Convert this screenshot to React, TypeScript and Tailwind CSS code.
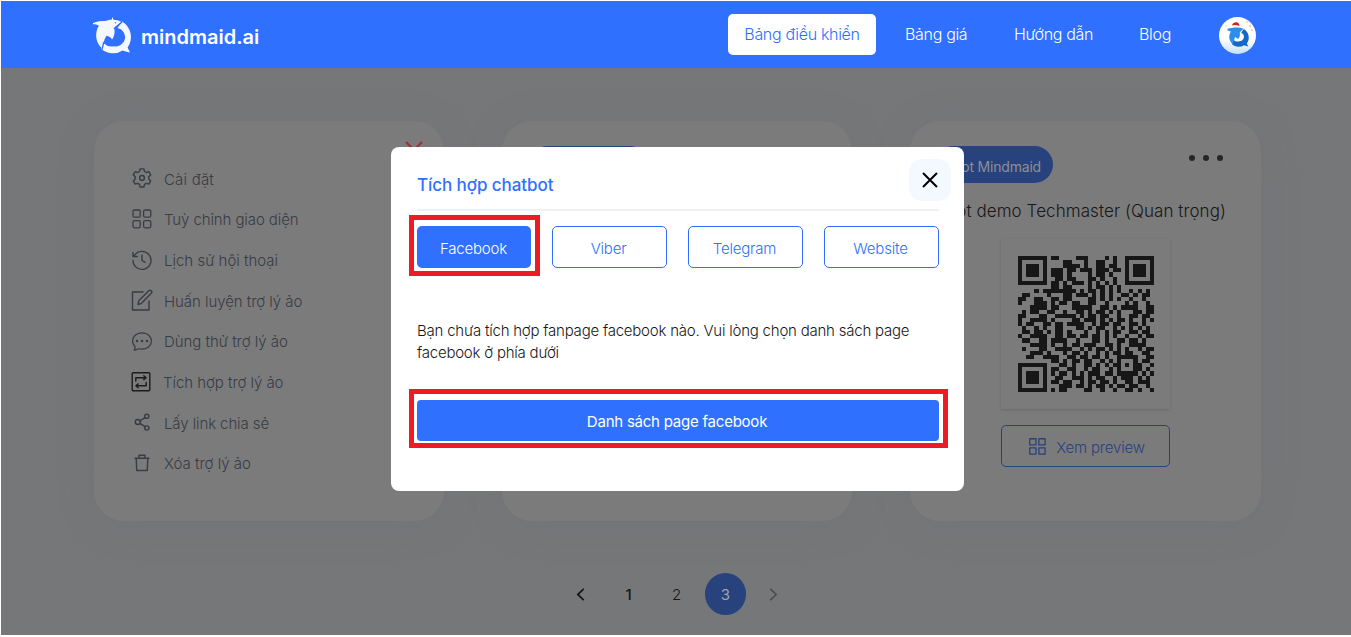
import type { ReactNode } from "react";
import { BsChatDots } from "react-icons/bs";

const QR = [
  "#######.##....###....#.#..#######",
  "#.....#....##...#..##..#..#.....#",
  "#.###.#....####.#..##.##..#.###.#",
  "#.###.#.###.##.###.###.##.#.###.#",
  "#.###.#.###.#....#.##.#...#.###.#",
  "#.....#..##.##...##.#..#..#.....#",
  "#######.##.#.###.#.#.#.#..#######",
  "........##.##....#.##.#.#........",
  "....#.########.#.##.#.#.#..#.#.#.",
  ".##....#...##.###.#.#.#..##.#.##.",
  "##..##..##.##....##.#.#.#..#..#..",
  "#...###.#.##.##..##..#....#.#..#.",
  "...####.##...#####..##.#.####..##",
  ".#.##..##..#..##.#.##.#.#...##.##",
  "##...##..#####.#.##.##..#..##.##.",
  "#..####.#....##.###.#.#.##.#..#.#",
  "#.##..##.##.####..#.##.##..##.#..",
  ".#..#.#..##...##.#.##..#.#.#.#.#.",
  ".##.##.#.##.#...#..#.#.##..##.##.",
  "#..####..##.##.##.##.#.#..#..#.##",
  ".##..##.####..#...##.#..##.##.#..",
  "...####.#..#.##.###..##.#..####..",
  ".#...##..####..#.#.##.#.#.#..#.##",
  "...###.#...#.##.#..#.#.##.##..##.",
  "..##..####..##.##.##.#..#####..##",
  "........##.#.##.##..#.#.#...#.##.",
  "#######...##.#..##.#.#.##.#.##..#",
  "#.....#.##..##..#.##..#.#...##.#.",
  "#.###.#.#.##.#.#.###.##.#####.#.#",
  "#.###.#..##..###.#.##..#.###.#.#.",
  "#.###.#.##.##..#.##.##.#..##.###.",
  "#.....#...###.##.#.##.#.##.##..#.",
  "#######.#.##....##..#..#..##.#..#",
];

function QrCode() {
  return (
    <svg className="size-[136px]" viewBox="0 0 33 33" shapeRendering="crispEdges" fill="#171717">
      {QR.flatMap((row, y) =>
        [...row].map((cell, x) => (cell === "#" ? <rect key={`${x}-${y}`} x={x} y={y} width="1" height="1" /> : null)),
      )}
    </svg>
  );
}

function DolphinMark({ className, fill, gap }: { className: string; fill: string; gap: string }) {
  return (
    <svg className={className} viewBox="0 0 39 37" fill="none">
      <path d="M29 4.5A18 18 0 0 1 34.6 30.5L37 35.5C33 34.8 32 34 29.5 33.4A17 17 0 0 1 8 31.5L11 26.5A11 11 0 0 0 21 29.3A9.3 9.3 0 0 0 24.5 11Z" fill={fill} />
      <path d="M0 6C4 4.3 8 4 12 4C15 3.2 17 2.8 18.7 2.8L19.3 0L20.5 2.8C23 3 26 3.5 28.5 5L21.5 10.2C21.5 14 22.3 18 19 22.5C18 20.2 16 19 13.5 18.7C11 22 10.2 27 9.3 31.5C4 27.5 1.8 19.5 4 12.8C4.5 11 5 10 6 9C4 7.5 2 7.3 0 7.3Z" fill={fill} />
      <path d="M29.2 4.8L21 12M10.8 25L9 32.5" stroke={gap} strokeWidth="1.3" />
      <circle cx="22.5" cy="5.8" r="0.7" fill={gap} />
    </svg>
  );
}

function Line({ children, className = "size-[22px]", stroke = 1.4 }: { children: ReactNode; className?: string; stroke?: number }) {
  return (
    <svg className={className} viewBox="0 0 22 22" fill="none" stroke="currentColor" strokeWidth={stroke} strokeLinecap="round" strokeLinejoin="round">
      {children}
    </svg>
  );
}

function GridGlyph({ round }: { round: number }) {
  return (
    <>
      <rect x="2" y="2" width="7.2" height="7.2" rx={round} />
      <rect x="12.6" y="2" width="7.2" height="7.2" rx={round} />
      <rect x="2" y="12.6" width="7.2" height="7.2" rx={round} />
      <rect x="12.6" y="12.6" width="7.2" height="7.2" rx={round} />
    </>
  );
}

const MENU: { label: string; text: string; icon: ReactNode }[] = [
  {
    label: "Cài đặt",
    text: "tracking-[0.2px]",
    icon: (
      <Line>
        <path d="M9.1 1.9h3.8l.6 2.6 1.8 1 2.5-.8 1.9 3.2-1.9 1.9v2.2l1.9 1.9-1.9 3.2-2.5-.7-1.8 1-.6 2.6H9.1l-.6-2.6-1.8-1-2.5.7-1.9-3.2 1.9-1.9V9.8L2.3 7.9l1.9-3.2 2.5.8 1.8-1z" />
        <circle cx="11" cy="10.9" r="2.4" />
      </Line>
    ),
  },
  { label: "Tuỳ chỉnh giao diện", text: "tracking-[-0.1px]", icon: <Line stroke={1.3}><GridGlyph round={1.5} /></Line> },
  {
    label: "Lịch sử hội thoại",
    text: "tracking-[0px]",
    icon: (
      <Line>
        <path d="M3.3 6.7A9 9 0 1 1 2 11.5M2 3.5v4h4.3M11 6v5.5l3 1.8" />
      </Line>
    ),
  },
  {
    label: "Huấn luyện trợ lý ảo",
    text: "tracking-[-0.05px]",
    icon: (
      <Line>
        <path d="M12 3H1.5v18H18v-9M7 15.500l.8-3.800L18 1.500c1.700-1 3.600.8 2.500 2.500L10.500 14.300z" />
      </Line>
    ),
  },
  { label: "Dùng thử trợ lý ảo", text: "tracking-[-0.03px]", icon: <BsChatDots className="ml-px size-[20px]" /> },
  {
    label: "Tích hợp trợ lý ảo",
    text: "-ml-px tracking-[-0.05px]",
    icon: (
      <span className="text-[#1c1c1c]">
        <Line>
          <rect x="1.2" y="1.8" width="17.6" height="18" rx="1" />
          <path d="M4.800 10V6.700h10M12.800 4.800l2.300 1.900-2.300 1.900M15.200 11.500v3.300h-10M7.200 12.900l-2.300 1.900 2.300 1.900" />
        </Line>
      </span>
    ),
  },
  {
    label: "Lấy link chia sẻ",
    text: "tracking-[-0.1px]",
    icon: (
      <Line>
        <circle cx="6.8" cy="11" r="2.5" />
        <circle cx="15.8" cy="5.3" r="2.1" />
        <circle cx="15.8" cy="17" r="2.1" />
        <path d="M9 9.800l5-3.200M9 12.400l5 3.300" />
      </Line>
    ),
  },
  {
    label: "Xóa trợ lý ảo",
    text: "tracking-[0px]",
    icon: (
      <Line>
        <path d="M4 6.300h14M8 6V3.300h6V6M5.200 6.500l.5 12h10.600l.5-12" />
      </Line>
    ),
  },
];

const CARD = "h-[400px] rounded-[30px] bg-[#7b7b7b] shadow-[0_4px_40px_rgba(90,98,110,0.13)]";

function Highlight({ edge }: { edge: string }) {
  return <span className={`pointer-events-none absolute -top-[11px] -right-[9px] -left-2 border-[5px] border-[#ed1c24] ${edge}`} />;
}

export default function App() {
  return (
    <div className="relative h-[637px] w-[1351px] overflow-hidden bg-white pt-px pb-[2px] pl-px font-['Inter',sans-serif]">
      <div className="flex h-full flex-col bg-[#767779]">
        <header className="flex h-[67px] shrink-0 items-center bg-[#2f70ff] pr-[95px] pl-[92px] text-white">
          <DolphinMark className="mt-px h-[37px] w-[39px]" fill="#f5f8ff" gap="#2f70ff" />
          <span className="mt-[5px] ml-[9px] text-[20px] font-semibold">mindmaid.ai</span>
          <nav className="ml-auto flex items-center text-[16px] font-light tracking-[-0.32px]">
            <a className="flex h-[41px] w-[148px] items-center justify-center rounded-[5px] bg-white pb-[2px] text-[#2f70ff]">
              <span className="whitespace-nowrap">Bảng điều khiển</span>
            </a>
            <a className="ml-[29px] w-[109px] pb-[2px] whitespace-nowrap">Bảng giá</a>
            <a className="w-[125px] pb-[2px] whitespace-nowrap">Hướng dẫn</a>
            <a className="w-[80px] pb-[2px]">Blog</a>
          </nav>
          <span className="mt-px flex size-[37px] items-center justify-center overflow-hidden rounded-full bg-[linear-gradient(#ffffff_60%,#c6def5)]">
            <svg className="size-[37px]" viewBox="0 0 37 37">
              <g transform="translate(8.500 9.500) scale(0.56)">
                <path d="M29 4.500A18 18 0 0 1 34.600 30.500L37 35.500L29.500 33.400A17 17 0 0 1 8 31.500L11 24A9.500 9.500 0 0 0 21 26.300A8 8 0 0 0 24.500 11Z" fill="#1767c9" />
                <path d="M0 4C8 2 20 0 28.500 4L22 10.200C22.500 15 22.300 19 19 22.500L13.500 18.700L9.300 31.500C3 26 1 18 6 9L0 7.300Z" fill="#2b8eea" />
              </g>
              <path d="M13 8.500Q14 5 17.500 5.200Q20.500 6 20.500 9Q16 7.500 13 8.500Z" fill="#d6201d" />
              <g fill="#ead9ad">
                <circle cx="28" cy="5" r="1" />
                <circle cx="31" cy="9" r="1.2" />
                <circle cx="33" cy="13" r="1" />
                <circle cx="7" cy="9" r=".8" />
              </g>
            </svg>
          </span>
        </header>

        <main className="flex flex-col pt-[53px] pl-[93px]">
          <div className="flex gap-[58px]">
            <section className={`${CARD} relative w-[350px] pt-[37px] pl-[37px]`}>
              <ul className="text-[15px] text-[#383c45]">
                {MENU.map((item) => (
                  <li key={item.label} className="flex h-[40.7px] items-center">
                    <span className="flex w-[33px] shrink-0 items-center">{item.icon}</span>
                    <span className={`pt-[3px] font-light whitespace-nowrap ${item.text}`}>{item.label}</span>
                  </li>
                ))}
              </ul>
              <svg className="absolute top-[20px] right-[20px] size-[20px]" viewBox="0 0 20 20" stroke="#a02f33" strokeWidth="2">
                <path d="M2 1l16 16M18 1L2 17" />
              </svg>
            </section>

            <section className={`${CARD} flex w-[350px] justify-start pt-[25px] pl-[27px]`}>
              <span className="h-[37px] w-[119px] rounded-full bg-[#28427e]" />
            </section>

            <section className={`${CARD} flex w-[351px] flex-col items-center pt-[25px]`}>
              <div className="flex w-full items-start justify-between pr-[38px] pl-[25px]">
                <span className="flex h-[37px] w-[118px] items-center justify-end rounded-full bg-[#28427e] pt-[3px] pr-3 text-[14px] tracking-[-0.2px] whitespace-nowrap text-[#8d8f94]">
                  Bot Mindmaid
                </span>
                <span className="flex gap-2 pt-[9px]">
                  <i className="size-[6px] rounded-full bg-[#262626]" />
                  <i className="size-[6px] rounded-full bg-[#262626]" />
                  <i className="size-[6px] rounded-full bg-[#262626]" />
                </span>
              </div>
              <h3 className="mt-4 self-end pr-[35px] text-[17px] leading-6 font-light tracking-[0.08px] whitespace-nowrap text-[#171717]">
                Bot demo Techmaster (Quan trọng)
              </h3>
              <div className="mt-4 flex h-[170px] w-[169px] items-center justify-center pl-px shadow-[0_1px_3px_rgba(0,0,0,0.15)]">
                <QrCode />
              </div>
              <button className="mt-4 flex h-[42px] w-[169px] items-center justify-center rounded-[5px] border border-[#28427e] pt-px pl-[2px] text-[#28427e]">
                <Line className="size-[19px]" stroke={1.5}><GridGlyph round={0} /></Line>
                <span className="ml-[9px] pt-[3px] text-[15px] font-light tracking-[-0.2px]">Xem preview</span>
              </button>
            </section>
          </div>

          <div className="mt-[52px] ml-[465px] flex h-[42px] items-center text-[15px] text-[#171717]">
            <span className="flex w-[43px] justify-center pt-px">
              <svg className="h-[13px] w-[9px]" viewBox="0 0 8 12" fill="none" stroke="currentColor" strokeWidth="1.6"><path d="M7 .8L1.500 6L7 11.200" /></svg>
            </span>
            <span className="w-[53px] pt-[3px] text-center font-medium">1</span>
            <span className="w-[43px] pt-[3px] text-center font-light">2</span>
            <span className="ml-[7px] flex h-[42px] w-[41px] items-center justify-center rounded-full bg-[#28427e] pt-[3px] text-[#a0a3aa]">3</span>
            <span className="flex w-[55px] justify-center pt-px text-[#4a4b4c]">
              <svg className="h-[13px] w-[9px]" viewBox="0 0 8 12" fill="none" stroke="currentColor" strokeWidth="1.4"><path d="M1 .8L6.500 6L1 11.200" /></svg>
            </span>
          </div>
        </main>
      </div>

      <div className="absolute top-[147px] left-[391px] h-[344px] w-[573px] rounded-[8px] bg-white pt-3 pr-[25px] pl-[26px]">
        <div className="-mr-3 flex h-[42px] items-center justify-between">
          <h2 className="pt-3 text-[17px] font-medium tracking-[-0.07px] text-[#2f70ff]">Tích hợp chatbot</h2>
          <button className="flex size-[42px] items-center justify-center rounded-[13px] bg-[#f3f9ff]">
            <svg className="mr-px size-4" viewBox="0 0 16 16" stroke="#000" strokeWidth="2"><path d="M1 1l14 14M15 1L1 15" /></svg>
          </button>
        </div>
        <div className="mt-2 h-[2px] bg-[#f0f0f0]" />
        <div className="mt-[15px] flex justify-between text-[15px] font-light tracking-[-0.2px]">
          <div className="relative w-[114px]">
            <button className="block h-[42px] w-full rounded-[5px] bg-[#2f70ff] pt-1 pr-px text-white">Facebook</button>
            <Highlight edge="-bottom-2" />
          </div>
          {["Viber", "Telegram", "Website"].map((name) => (
            <button key={name} className="h-[42px] w-[115px] rounded-[5px] border border-[#2f70ff] pt-1 pr-[2px] text-[#2f70ff]">
              {name}
            </button>
          ))}
        </div>
        <p className="mt-[52px] text-[15px] leading-[22px] font-light tracking-[-0.22px] text-[#171717]">
          <span className="block whitespace-nowrap">Bạn chưa tích hợp fanpage facebook nào. Vui lòng chọn danh sách page</span>
          <span className="block whitespace-nowrap">facebook ở phía dưới</span>
        </p>
        <div className="relative mt-9">
          <button className="block h-[41px] w-full rounded-[4px] bg-[#2f70ff] pt-1 pr-[2px] text-[15px] tracking-[-0.23px] text-white">Danh sách page facebook</button>
          <Highlight edge="-bottom-[7px]" />
        </div>
      </div>
    </div>
  );
}
